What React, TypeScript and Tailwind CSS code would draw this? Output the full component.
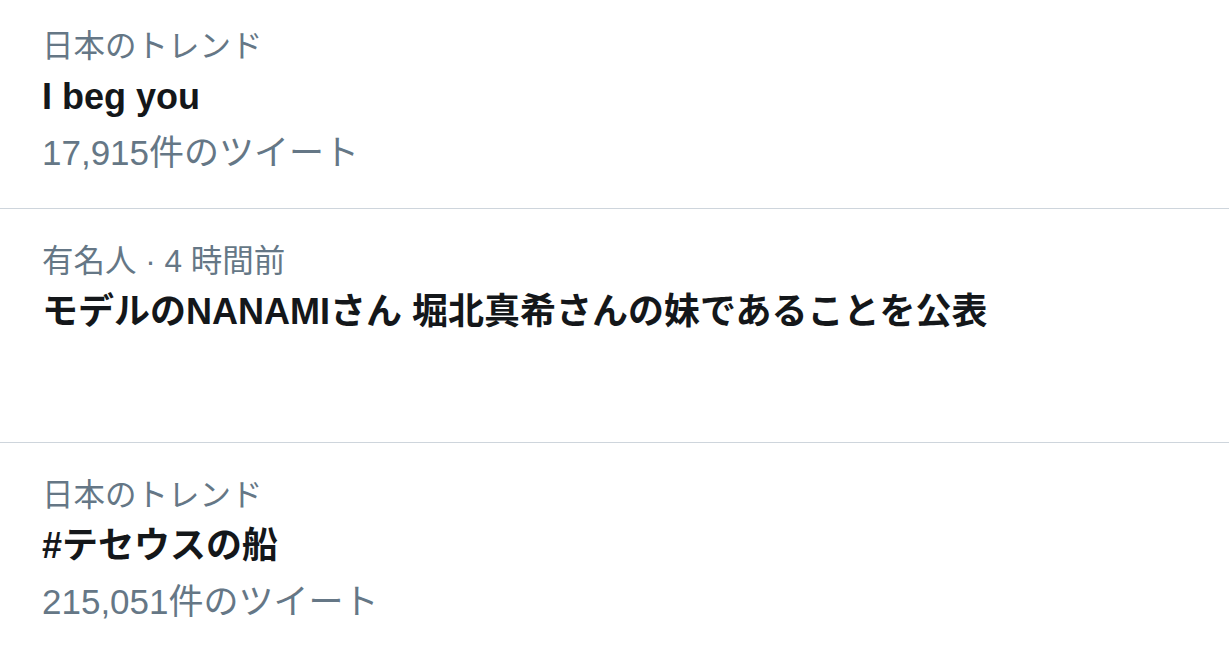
const trends: { context: string; title: string; count?: string; tall?: boolean }[] = [
  { context: "日本のトレンド", title: "I beg you", count: "17,915件のツイート" },
  { context: "有名人 · 4 時間前", title: "モデルのNANAMIさん 堀北真希さんの妹であることを公表", tall: true },
  { context: "日本のトレンド", title: "#テセウスの船", count: "215,051件のツイート" },
]

export default function App() {
  return (
    <main
      className="w-[1229px] h-[652px] overflow-hidden bg-white"
      style={{ fontFamily: '"Liberation Sans", "Noto Sans CJK JP", sans-serif' }}
    >
      <div className="-mt-[6px]">
        {trends.map((t, i) => (
          <section
            key={i}
            className={`px-[42px] pt-[28px] border-b border-[#ced5dc] ${t.tall ? "h-[234px]" : "h-[215px]"}`}
          >
            <p className="text-[31.5px] leading-[48px] text-[#657786]">{t.context}</p>
            <p className="text-[36px] leading-[54px] font-bold text-[#14171a]">{t.title}</p>
            {t.count && <p className="text-[35px] leading-[58px] text-[#657786]">{t.count}</p>}
          </section>
        ))}
      </div>
    </main>
  )
}
